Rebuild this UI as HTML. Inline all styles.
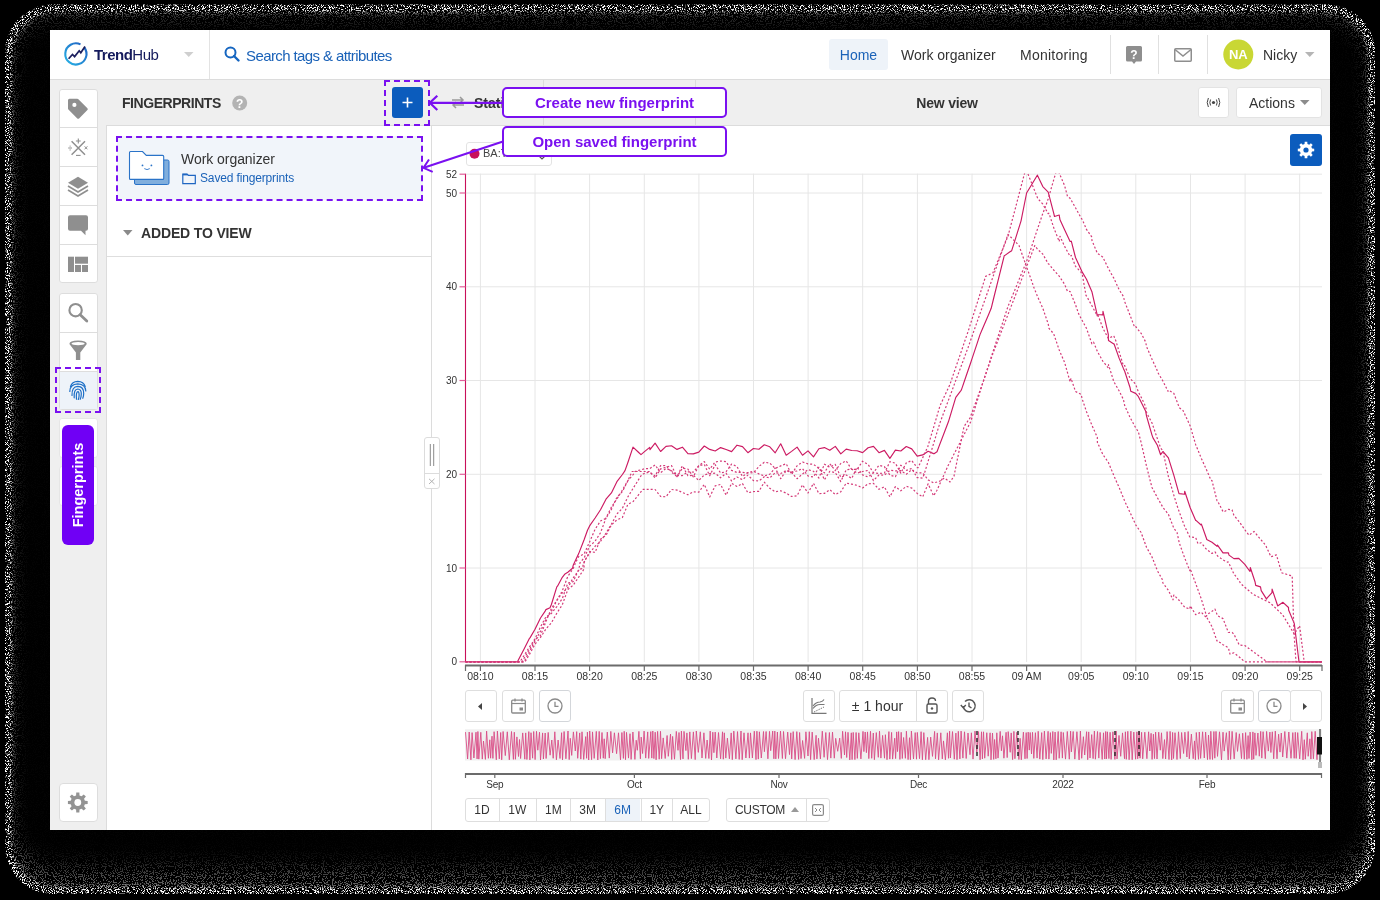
<!DOCTYPE html><html><head><meta charset="utf-8"><style>
html,body{margin:0;padding:0;}
body{width:1380px;height:900px;position:relative;overflow:hidden;background:#000;font-family:"Liberation Sans",sans-serif;color:#333;}
div{box-sizing:border-box;}
body{-webkit-font-smoothing:antialiased;}
body>div,body>svg{will-change:transform;}
svg{position:absolute;overflow:visible;}
</style></head><body>

<svg style="left:0;top:0" width="1380" height="900">
<defs>
<filter id="nzW" x="0" y="0" width="1380" height="900" filterUnits="userSpaceOnUse" color-interpolation-filters="sRGB">
<feTurbulence type="fractalNoise" baseFrequency="0.85" numOctaves="2" seed="9"/>
<feColorMatrix type="matrix" values="0 0 0 0 1  0 0 0 0 1  0 0 0 0 1  3 0 0 0 -1.05"/>
<feComponentTransfer><feFuncA type="discrete" tableValues="0 0 0 0 0 1 1"/></feComponentTransfer>
</filter>
<filter id="nzG" x="0" y="0" width="1380" height="900" filterUnits="userSpaceOnUse" color-interpolation-filters="sRGB">
<feTurbulence type="fractalNoise" baseFrequency="0.9" numOctaves="2" seed="23"/>
<feColorMatrix type="matrix" values="0 0 0 0 1  0 0 0 0 1  0 0 0 0 1  3 0 0 0 -1.05"/>
<feComponentTransfer><feFuncA type="discrete" tableValues="0 0 0 0 1 1"/></feComponentTransfer>
</filter>
<filter id="bl" x="-10%" y="-10%" width="120%" height="120%"><feGaussianBlur stdDeviation="8 12"/></filter>
<filter id="bl2" x="-10%" y="-10%" width="120%" height="120%"><feGaussianBlur stdDeviation="2"/></filter>
<mask id="grad" maskUnits="userSpaceOnUse" x="0" y="0" width="1380" height="900">
<rect x="5" y="4.5" width="1370" height="889.5" rx="48" fill="#fff"/>
<rect x="12" y="14" width="1356" height="857" rx="44" fill="#000" fill-opacity="0.97" filter="url(#bl)"/>
</mask>
<mask id="rim" maskUnits="userSpaceOnUse" x="0" y="0" width="1380" height="900">
<rect x="5" y="4.5" width="1370" height="889.5" rx="48" fill="#fff"/>
<rect x="12" y="12.5" width="1356" height="874" rx="44" fill="#000" filter="url(#bl2)"/>
</mask>
</defs>
<rect x="0" y="0" width="1380" height="900" fill="#fff" filter="url(#nzG)" mask="url(#grad)" opacity="0.42"/>
<rect x="0" y="0" width="1380" height="900" fill="#fff" filter="url(#nzW)" mask="url(#rim)"/>
</svg>
<div style="position:absolute;left:50px;top:30px;width:1280px;height:800px;background:#fff;"></div>
<div style="position:absolute;left:50px;top:79px;width:1280px;height:1px;background:#dcdcdc;"></div>
<svg style="left:0;top:0" width="1380" height="900" viewBox="0 0 1380 900">
<defs><linearGradient id="lg" x1="0" y1="1" x2="1" y2="0"><stop offset="0" stop-color="#27b3e6"/><stop offset="1" stop-color="#1f5cc0"/></linearGradient></defs>
<path d="M 84.3 47.5 A 10.6 10.6 0 1 1 80.5 44.4" fill="none" stroke="url(#lg)" stroke-width="2.1"/>
<polyline points="68.6,58.8 72.5,54.5 74.6,56.6 79.2,50.8 80.8,52.8 85,46.6" fill="none" stroke="#1c1f5e" stroke-width="1.7" stroke-linejoin="miter"/>
</svg>
<div style="position:absolute;left:94px;top:45px;height:20px;line-height:20px;white-space:nowrap;font-size:15px;color:#141a5c;letter-spacing:-0.5px;"><b>Trend</b>Hub</div>
<svg style="left:184px;top:52px" width="10" height="5"><path d="M0 0 L9.5 0 L4.75 5 Z" fill="#cfcfcf"/></svg>
<div style="position:absolute;left:209px;top:30px;width:1px;height:49px;background:#e3e3e3;"></div>
<svg style="left:224px;top:46px" width="17" height="17"><circle cx="6.5" cy="6.5" r="5" fill="none" stroke="#1565c0" stroke-width="2"/><line x1="10" y1="10" x2="14.5" y2="14.5" stroke="#1565c0" stroke-width="2.4" stroke-linecap="round"/></svg>
<div style="position:absolute;left:246px;top:45.5px;height:20px;line-height:20px;white-space:nowrap;font-size:15px;color:#1a62b8;letter-spacing:-0.6px;">Search tags &amp; attributes</div>
<div style="position:absolute;left:829px;top:39px;width:59px;height:31px;background:#eef3f9;border-radius:3px;"></div>
<div style="position:absolute;left:829px;top:45px;width:59px;height:20px;line-height:20px;white-space:nowrap;font-size:14px;color:#1a62b8;text-align:center;">Home</div>
<div style="position:absolute;left:901px;top:45px;height:20px;line-height:20px;white-space:nowrap;font-size:14px;color:#333;">Work organizer</div>
<div style="position:absolute;left:1020px;top:45px;height:20px;line-height:20px;white-space:nowrap;font-size:14px;color:#333;letter-spacing:0.25px;">Monitoring</div>
<div style="position:absolute;left:1110px;top:35px;width:1px;height:39px;background:#e0e0e0;"></div>
<div style="position:absolute;left:1158px;top:35px;width:1px;height:39px;background:#e0e0e0;"></div>
<div style="position:absolute;left:1207px;top:35px;width:1px;height:39px;background:#e0e0e0;"></div>
<svg style="left:1126px;top:46px" width="17" height="19"><path d="M1.5 0 H14.5 Q16 0 16 1.5 V14 Q16 15.5 14.5 15.5 H10 L8 18 L6 15.5 H1.5 Q0 15.5 0 14 V1.5 Q0 0 1.5 0 Z" fill="#8e8e8e"/><text x="8" y="12.5" font-size="12" font-weight="bold" text-anchor="middle" fill="#fff" font-family="Liberation Sans">?</text></svg>
<svg style="left:1174px;top:47.5px" width="18" height="14"><rect x="0.75" y="0.75" width="16.5" height="12.5" rx="1" fill="none" stroke="#8e8e8e" stroke-width="1.5"/><polyline points="1,1.5 9,8 17,1.5" fill="none" stroke="#8e8e8e" stroke-width="1.5"/></svg>
<svg style="left:1223px;top:39px" width="31" height="31"><circle cx="15.3" cy="15.5" r="15" fill="#c9d734"/><text x="15.3" y="20.2" font-size="13" font-weight="bold" text-anchor="middle" fill="#fff" font-family="Liberation Sans">NA</text></svg>
<div style="position:absolute;left:1263px;top:45px;height:20px;line-height:20px;white-space:nowrap;font-size:14px;color:#333;">Nicky</div>
<svg style="left:1305px;top:52px" width="10" height="5"><path d="M0 0 L9.5 0 L4.75 5 Z" fill="#b5b5b5"/></svg>
<div style="position:absolute;left:50px;top:80px;width:57px;height:750px;background:#efefef;"></div>
<div style="position:absolute;left:59px;top:89px;width:39px;height:194px;background:#fff;border:1px solid #dddddd;border-radius:3px;"></div>
<div style="position:absolute;left:59px;top:127px;width:39px;height:1px;background:#dddddd;"></div>
<div style="position:absolute;left:59px;top:166px;width:39px;height:1px;background:#dddddd;"></div>
<div style="position:absolute;left:59px;top:205px;width:39px;height:1px;background:#dddddd;"></div>
<div style="position:absolute;left:59px;top:244px;width:39px;height:1px;background:#dddddd;"></div>
<div style="position:absolute;left:59px;top:293px;width:39px;height:117px;background:#fff;border:1px solid #dddddd;border-radius:3px;"></div>
<div style="position:absolute;left:59px;top:332px;width:39px;height:1px;background:#dddddd;"></div>
<div style="position:absolute;left:59px;top:371px;width:39px;height:1px;background:#dddddd;"></div>
<div style="position:absolute;left:60px;top:372px;width:37px;height:37px;background:#eef3f9;"></div>
<div style="position:absolute;left:55px;top:367px;width:46px;height:46px;border:2px dashed #7a10f0;"></div>
<div style="position:absolute;left:59px;top:418px;width:39px;height:40px;background:#fff;border:1px solid #e6e6e6;border-radius:3px;"></div>
<div style="position:absolute;left:59px;top:466px;width:39px;height:40px;background:#fff;border:1px solid #e6e6e6;border-radius:3px;"></div>
<div style="position:absolute;left:62px;top:425px;width:32px;height:120px;background:#7000f5;border-radius:6px;"></div>
<div style="position:absolute;left:62px;top:425px;width:32px;height:120px;"><div style="position:absolute;left:16px;top:60px;transform:translate(-50%,-50%) rotate(-90deg);font-size:14.5px;font-weight:bold;color:#fff;white-space:nowrap;line-height:16px;">Fingerprints</div></div>
<div style="position:absolute;left:59px;top:783px;width:39px;height:39px;background:#fff;border:1px solid #dddddd;border-radius:4px;"></div>
<svg style="left:0;top:0" width="1380" height="900">
<path d="M68 100.3 Q68 98.8 69.5 98.8 L77.3 98.8 Q77.9 98.8 78.4 99.3 L87.4 108.3 Q88.3 109.2 87.4 110.1 L79.1 118.4 Q78.2 119.3 77.3 118.4 L68.4 109.5 Q68 109.1 68 108.5 Z" fill="#8f8f8f"/>
<circle cx="74.4" cy="104.9" r="2.1" fill="#fff"/>
<path d="M71.6 141.2 L85 154.8 M85 141.2 L71.6 154.8" stroke="#8f8f8f" stroke-width="1.5"/>
<path d="M78.3 138.6 V143.4 M75.9 141 H80.7" stroke="#8f8f8f" stroke-width="1.1"/>
<path d="M76 155.4 H80.6" stroke="#8f8f8f" stroke-width="1.1"/>
<path d="M68.2 148 H72" stroke="#8f8f8f" stroke-width="1"/><circle cx="70.1" cy="146.1" r="0.6" fill="#8f8f8f"/><circle cx="70.1" cy="149.9" r="0.6" fill="#8f8f8f"/>
<path d="M84.6 146.3 L87.4 149.3 M87.4 146.3 L84.6 149.3" stroke="#8f8f8f" stroke-width="1"/>
<path d="M78 176.7 L88 182.7 L78 188.7 L68 182.7 Z" fill="#8f8f8f"/>
<path d="M68 186 L78 192 L88 186" fill="none" stroke="#8f8f8f" stroke-width="1.7"/>
<path d="M68 190 L78 196 L88 190" fill="none" stroke="#8f8f8f" stroke-width="1.7"/>
<path d="M70 215.3 H86 Q88 215.3 88 217.3 V228.7 Q88 230.7 86 230.7 H85.5 V235.3 L81 230.7 H70 Q68 230.7 68 228.7 V217.3 Q68 215.3 70 215.3 Z" fill="#8f8f8f"/>
<rect x="68" y="256.7" width="6" height="15.3" fill="#8f8f8f"/><rect x="75" y="256.7" width="13" height="7" fill="#8f8f8f"/>
<rect x="75" y="265" width="6" height="7" fill="#8f8f8f"/><rect x="82" y="265" width="6" height="7" fill="#8f8f8f"/>
<circle cx="75.6" cy="310.2" r="6.2" fill="none" stroke="#8f8f8f" stroke-width="2.1"/>
<path d="M80.2 314.8 L86.8 321" stroke="#8f8f8f" stroke-width="2.8" stroke-linecap="round"/>
<path d="M69.4 344 Q69.4 340.5 78 340.5 Q86.8 340.5 86.8 344 L80.3 352.5 V360 H75.9 V352.5 Z" fill="#8f8f8f"/>
<ellipse cx="78.1" cy="343.6" rx="6.6" ry="1.7" fill="#fff"/>
<g fill="none" stroke="#1d6fc6" stroke-width="1.2" stroke-linecap="round">
<path d="M70.5 386.5 Q72 381.5 77.8 381.3 Q83.6 381.5 85.2 386.5"/>
<path d="M69.8 391.5 Q69.8 384.2 77.8 383.8 Q85.6 384.2 85.8 391"/>
<path d="M72 395.5 Q71.6 386.6 77.8 386.4 Q83.8 386.6 83.7 393.5 Q83.6 396.5 82.8 398.3"/>
<path d="M74.2 397.8 Q73.6 389.2 77.8 389 Q81.4 389.2 81.3 394 Q81.2 397.3 80.2 399.3"/>
<path d="M76.5 399.2 Q75.8 391.8 77.9 391.7 Q79.2 391.8 79.1 395.5 Q79 397.5 78.3 399.5"/>
</g>
</svg>
<div style="position:absolute;left:106px;top:80px;width:326px;height:46px;background:#efefef;"></div>
<div style="position:absolute;left:106px;top:125px;width:326px;height:705px;background:#fff;border-top:1px solid #dcdcdc;border-right:1px solid #dcdcdc;border-left:1px solid #dcdcdc;"></div>
<div style="position:absolute;left:122px;top:93px;height:20px;line-height:20px;white-space:nowrap;font-size:14px;font-weight:bold;color:#333;letter-spacing:-0.45px;">FINGERPRINTS</div>
<svg style="left:232px;top:95px" width="16" height="16"><circle cx="7.7" cy="8" r="7.5" fill="#b3b3b3"/><text x="7.7" y="12.6" font-size="12" font-weight="bold" text-anchor="middle" fill="#fff" font-family="Liberation Sans">?</text></svg>
<div style="position:absolute;left:392px;top:87px;width:31px;height:31px;background:#0b5cbd;border-radius:3px;"></div>
<svg style="left:401px;top:96px" width="13" height="13"><path d="M6.5 1.5 V11.5 M1.5 6.5 H11.5" stroke="#fff" stroke-width="1.6"/></svg>
<div style="position:absolute;left:384px;top:80px;width:46px;height:46px;border:2px dashed #7a10f0;"></div>
<div style="position:absolute;left:117px;top:136px;width:306px;height:64px;background:#f1f5fa;"></div>
<div style="position:absolute;left:116px;top:136px;width:307px;height:65px;border:2px dashed #7a10f0;"></div>
<svg style="left:0;top:0" width="1380" height="900">
<path d="M134.5 161 Q134.5 160 135.5 160 L167.5 160 Q169 160 169 161.5 L169 183 Q169 184.5 167.5 184.5 L136 184.5 Q134.5 184.5 134.5 183 Z" fill="#80aedd" stroke="#2a73c8" stroke-width="1"/>
<path d="M129.5 152.5 Q129.5 151.5 130.5 151.5 L142.5 151.5 L146.3 155.4 L162.5 155.4 Q163.7 155.4 163.7 156.6 L163.7 178.4 Q163.7 179.4 162.7 179.4 L130.5 179.4 Q129.5 179.4 129.5 178.4 Z" fill="#fff" stroke="#2a73c8" stroke-width="1.1"/>
<circle cx="142.5" cy="165.4" r="0.9" fill="#2a73c8"/><circle cx="151.4" cy="165.4" r="0.9" fill="#2a73c8"/>
<path d="M144.3 168.6 Q147 170.6 149.8 168.6" fill="none" stroke="#2a73c8" stroke-width="0.9"/>
<path d="M182.8 174.2 L187 174.2 L188.4 175.3 L195.3 175.3 L195.3 183.6 L182.8 183.6 Z" fill="none" stroke="#1f66c2" stroke-width="1.2"/>
<line x1="182.8" y1="174.6" x2="187.5" y2="174.6" stroke="#1f66c2" stroke-width="1.6"/>
</svg>
<div style="position:absolute;left:181px;top:149px;height:20px;line-height:20px;white-space:nowrap;font-size:14px;color:#333;letter-spacing:-0.05px;">Work organizer</div>
<div style="position:absolute;left:200px;top:170px;height:17px;line-height:17px;white-space:nowrap;font-size:12px;color:#1a62b8;letter-spacing:-0.15px;">Saved fingerprints</div>
<svg style="left:123px;top:230px" width="10" height="6"><path d="M0 0 L9.5 0 L4.75 5.5 Z" fill="#8a8a8a"/></svg>
<div style="position:absolute;left:141px;top:223px;height:20px;line-height:20px;white-space:nowrap;font-size:14px;font-weight:bold;color:#333;letter-spacing:-0.15px;">ADDED TO VIEW</div>
<div style="position:absolute;left:107px;top:256px;width:324px;height:1px;background:#dedede;"></div>
<div style="position:absolute;left:432px;top:80px;width:898px;height:46px;background:#efefef;border-bottom:1px solid #dcdcdc;"></div>
<svg style="left:450px;top:96px" width="16" height="13"><path d="M2 4 H13 M10 1 L13 4 L10 7 M14 9 H3 M6 6 L3 9 L6 12" fill="none" stroke="#9a9a9a" stroke-width="1.5"/></svg>
<div style="position:absolute;left:474px;top:93px;height:20px;line-height:20px;white-space:nowrap;font-size:14px;font-weight:bold;color:#333;">Stati</div>
<div style="position:absolute;left:543px;top:80px;width:1px;height:45px;background:#dcdcdc;"></div>
<div style="position:absolute;left:695px;top:80px;width:1px;height:45px;background:#dcdcdc;"></div>
<div style="position:absolute;left:897px;top:93px;width:100px;height:20px;line-height:20px;white-space:nowrap;font-size:14px;font-weight:bold;color:#333;text-align:center;letter-spacing:-0.2px;">New view</div>
<div style="position:absolute;left:1198px;top:87px;width:31px;height:31px;background:#fff;border:1px solid #e3e3e3;border-radius:3px;"></div>
<svg style="left:1206px;top:97px" width="15" height="11"><circle cx="7.5" cy="5.5" r="1.6" fill="#444"/><path d="M4.6 2.5 Q3 5.5 4.6 8.5 M10.4 2.5 Q12 5.5 10.4 8.5 M2.4 1 Q0 5.5 2.4 10 M12.6 1 Q15 5.5 12.6 10" fill="none" stroke="#444" stroke-width="1"/></svg>
<div style="position:absolute;left:1236px;top:87px;width:86px;height:31px;background:#fff;border:1px solid #e3e3e3;border-radius:3px;"></div>
<div style="position:absolute;left:1249px;top:93px;height:20px;line-height:20px;white-space:nowrap;font-size:14px;color:#333;">Actions</div>
<svg style="left:1300px;top:100px" width="10" height="6"><path d="M0 0 L9.5 0 L4.75 5 Z" fill="#8c8c8c"/></svg>
<svg style="left:0;top:0" width="1380" height="900"><defs><clipPath id="plot"><rect x="465" y="173.5" width="858" height="490"/></clipPath></defs>
<line x1="465.5" y1="174.2" x2="1322" y2="174.2" stroke="#e6e6e6" stroke-width="1"/><line x1="465.5" y1="193.0" x2="1322" y2="193.0" stroke="#e6e6e6" stroke-width="1"/><line x1="465.5" y1="286.8" x2="1322" y2="286.8" stroke="#e6e6e6" stroke-width="1"/><line x1="465.5" y1="380.5" x2="1322" y2="380.5" stroke="#e6e6e6" stroke-width="1"/><line x1="465.5" y1="474.3" x2="1322" y2="474.3" stroke="#e6e6e6" stroke-width="1"/><line x1="465.5" y1="568.0" x2="1322" y2="568.0" stroke="#e6e6e6" stroke-width="1"/><line x1="480.4" y1="173.7" x2="480.4" y2="662" stroke="#e6e6e6" stroke-width="1"/><line x1="535.0" y1="173.7" x2="535.0" y2="662" stroke="#e6e6e6" stroke-width="1"/><line x1="589.6" y1="173.7" x2="589.6" y2="662" stroke="#e6e6e6" stroke-width="1"/><line x1="644.3" y1="173.7" x2="644.3" y2="662" stroke="#e6e6e6" stroke-width="1"/><line x1="698.9" y1="173.7" x2="698.9" y2="662" stroke="#e6e6e6" stroke-width="1"/><line x1="753.5" y1="173.7" x2="753.5" y2="662" stroke="#e6e6e6" stroke-width="1"/><line x1="808.1" y1="173.7" x2="808.1" y2="662" stroke="#e6e6e6" stroke-width="1"/><line x1="862.7" y1="173.7" x2="862.7" y2="662" stroke="#e6e6e6" stroke-width="1"/><line x1="917.4" y1="173.7" x2="917.4" y2="662" stroke="#e6e6e6" stroke-width="1"/><line x1="972.0" y1="173.7" x2="972.0" y2="662" stroke="#e6e6e6" stroke-width="1"/><line x1="1026.6" y1="173.7" x2="1026.6" y2="662" stroke="#e6e6e6" stroke-width="1"/><line x1="1081.2" y1="173.7" x2="1081.2" y2="662" stroke="#e6e6e6" stroke-width="1"/><line x1="1135.8" y1="173.7" x2="1135.8" y2="662" stroke="#e6e6e6" stroke-width="1"/><line x1="1190.5" y1="173.7" x2="1190.5" y2="662" stroke="#e6e6e6" stroke-width="1"/><line x1="1245.1" y1="173.7" x2="1245.1" y2="662" stroke="#e6e6e6" stroke-width="1"/><line x1="1299.7" y1="173.7" x2="1299.7" y2="662" stroke="#e6e6e6" stroke-width="1"/>
<line x1="465.5" y1="173.7" x2="465.5" y2="662" stroke="#c8105a" stroke-width="1.1"/>
<line x1="459.5" y1="174.2" x2="465.5" y2="174.2" stroke="#e0609a" stroke-width="1.2"/>
<text x="457" y="177.8" font-size="10" text-anchor="end" fill="#333" font-family="Liberation Sans">52</text>
<line x1="459.5" y1="193.0" x2="465.5" y2="193.0" stroke="#e0609a" stroke-width="1.2"/>
<text x="457" y="196.6" font-size="10" text-anchor="end" fill="#333" font-family="Liberation Sans">50</text>
<line x1="459.5" y1="286.8" x2="465.5" y2="286.8" stroke="#e0609a" stroke-width="1.2"/>
<text x="457" y="290.4" font-size="10" text-anchor="end" fill="#333" font-family="Liberation Sans">40</text>
<line x1="459.5" y1="380.5" x2="465.5" y2="380.5" stroke="#e0609a" stroke-width="1.2"/>
<text x="457" y="384.1" font-size="10" text-anchor="end" fill="#333" font-family="Liberation Sans">30</text>
<line x1="459.5" y1="474.3" x2="465.5" y2="474.3" stroke="#e0609a" stroke-width="1.2"/>
<text x="457" y="477.9" font-size="10" text-anchor="end" fill="#333" font-family="Liberation Sans">20</text>
<line x1="459.5" y1="568.0" x2="465.5" y2="568.0" stroke="#e0609a" stroke-width="1.2"/>
<text x="457" y="571.6" font-size="10" text-anchor="end" fill="#333" font-family="Liberation Sans">10</text>
<line x1="459.5" y1="661.8" x2="465.5" y2="661.8" stroke="#e0609a" stroke-width="1.2"/>
<text x="457" y="665.4" font-size="10" text-anchor="end" fill="#333" font-family="Liberation Sans">0</text>
<g clip-path="url(#plot)" fill="none" stroke-linejoin="round">
<path d="M465.5 661.8 L469.5 661.8 L474.9 661.8 L480.4 661.8 L485.9 661.8 L491.3 661.8 L496.8 661.8 L502.2 661.8 L507.7 661.8 L513.2 661.8 L517.5 661.8 L518.6 659.6 L524.1 649.0 L529.5 638.3 L530.0 637.9 L535.0 629.3 L540.5 618.0 L545.0 611.4 L545.9 609.6 L550.0 607.8 L551.4 604.5 L556.8 586.9 L557.5 586.2 L562.3 577.3 L565.0 573.9 L567.8 572.2 L572.5 568.3 L573.2 565.3 L578.7 553.6 L584.1 539.7 L587.5 530.2 L589.6 525.9 L595.1 518.0 L600.5 509.7 L606.0 499.2 L611.4 492.9 L616.9 481.7 L622.4 474.5 L625.0 470.6 L627.8 462.7 L633.0 447.1 L633.3 447.4 L638.7 452.5 L641.0 454.6 L644.2 451.9 L649.7 447.4 L650.0 449.6 L655.1 443.1 L660.6 451.5 L666.0 446.4 L671.5 445.8 L677.0 449.4 L682.4 447.2 L687.9 453.7 L693.3 453.9 L698.8 452.1 L704.3 446.0 L709.7 449.4 L715.2 451.0 L720.6 447.6 L726.1 449.5 L731.6 451.6 L737.0 445.2 L742.5 446.6 L747.9 452.7 L753.4 448.5 L758.9 449.3 L764.3 444.8 L769.8 446.8 L775.2 452.8 L780.7 443.8 L786.2 455.2 L791.6 451.4 L797.1 447.1 L802.5 455.2 L808.0 450.9 L813.5 456.9 L818.9 448.8 L824.4 447.6 L829.8 450.3 L835.3 446.4 L840.8 453.9 L846.2 449.1 L851.7 450.5 L857.1 450.8 L862.6 452.6 L868.1 447.7 L873.5 446.4 L879.0 452.7 L884.4 450.4 L889.9 458.4 L895.4 450.1 L900.8 451.0 L906.3 446.5 L911.7 448.9 L917.2 456.1 L922.7 454.9 L928.1 451.3 L933.6 453.6 L934.0 453.7 L937.0 451.8 L939.0 446.4 L944.5 432.0 L948.4 421.8 L950.0 416.6 L955.4 398.6 L955.8 397.4 L960.9 390.6 L961.4 389.9 L966.3 375.5 L970.7 362.7 L971.8 359.4 L977.3 342.9 L980.0 334.6 L982.7 328.2 L988.2 315.4 L991.2 308.3 L993.6 298.5 L999.1 276.4 L1004.2 255.8 L1004.6 255.6 L1010.0 251.8 L1011.7 250.7 L1015.5 238.7 L1020.9 221.3 L1021.0 221.1 L1026.4 194.0 L1026.6 193.0 L1031.9 184.3 L1037.3 175.3 L1037.4 175.2 L1042.8 186.6 L1048.2 192.1 L1049.0 195.2 L1053.7 213.1 L1054.5 216.5 L1059.2 215.0 L1060.0 219.8 L1064.6 229.8 L1070.1 241.5 L1071.3 241.2 L1075.5 257.5 L1081.0 269.4 L1082.4 272.4 L1086.5 279.2 L1091.7 291.2 L1091.9 291.7 L1097.3 315.4 L1097.4 314.5 L1102.8 314.9 L1103.0 311.4 L1108.3 334.4 L1108.5 340.6 L1113.8 344.0 L1114.0 343.8 L1119.2 358.4 L1123.4 368.4 L1124.7 371.2 L1130.1 387.8 L1130.8 391.3 L1135.6 393.4 L1138.3 396.4 L1141.1 402.1 L1145.7 411.3 L1146.5 415.8 L1152.0 435.1 L1153.0 437.9 L1157.4 445.2 L1160.6 454.7 L1162.9 451.5 L1168.0 457.4 L1168.4 457.9 L1173.8 475.2 L1179.0 493.7 L1179.3 493.6 L1184.5 494.2 L1184.7 491.3 L1190.2 507.7 L1195.7 520.4 L1196.0 520.3 L1201.1 525.0 L1201.4 524.1 L1206.6 538.8 L1206.7 539.4 L1212.0 542.3 L1217.0 546.3 L1217.5 545.1 L1223.0 552.8 L1228.4 552.8 L1229.0 555.1 L1233.9 558.6 L1238.4 558.4 L1239.3 558.8 L1244.8 564.4 L1250.0 571.5 L1250.3 567.5 L1255.0 581.7 L1255.7 585.4 L1260.5 586.9 L1261.2 590.6 L1266.6 599.1 L1267.0 598.1 L1272.0 592.6 L1272.1 589.1 L1277.4 605.0 L1277.6 605.9 L1283.0 602.3 L1288.5 607.5 L1288.6 610.0 L1293.9 622.6 L1294.3 623.6 L1299.0 661.8 L1299.4 661.8 L1304.9 661.8 L1310.3 661.8 L1315.8 661.8 L1321.2 661.8 L1322.0 661.8" stroke="#cc1a62" stroke-width="1.15"/>
<path d="M465.5 661.8 L469.5 661.8 L474.9 661.8 L480.4 661.8 L485.9 661.8 L491.3 661.8 L496.8 661.8 L502.2 661.8 L507.7 661.8 L513.2 661.8 L518.6 661.8 L522.0 661.8 L524.1 658.3 L529.5 649.2 L535.0 639.7 L540.5 635.5 L545.9 621.7 L551.4 608.4 L556.8 600.4 L562.3 592.9 L567.8 587.8 L573.2 577.8 L578.7 570.5 L580.0 562.7 L584.1 557.9 L589.6 546.2 L595.1 541.2 L600.5 532.8 L606.0 518.0 L611.4 507.1 L616.9 499.0 L622.4 490.1 L627.8 480.7 L633.3 474.4 L635.0 471.5 L638.7 470.4 L644.2 468.9 L645.0 468.7 L649.7 468.6 L655.1 465.0 L660.6 472.7 L666.0 468.3 L671.5 470.7 L677.0 475.6 L682.4 475.6 L687.9 471.8 L693.3 472.1 L698.8 465.6 L704.3 461.6 L709.7 469.2 L715.2 461.9 L720.6 461.1 L726.1 461.6 L731.6 470.4 L737.0 472.5 L742.5 472.4 L747.9 472.9 L753.4 472.7 L758.9 466.4 L764.3 462.2 L769.8 463.1 L775.2 468.5 L780.7 465.9 L786.2 463.7 L791.6 474.4 L797.1 465.7 L802.5 462.0 L808.0 463.9 L813.5 464.3 L818.9 468.4 L824.4 472.9 L829.8 463.7 L835.3 470.5 L840.8 463.5 L846.2 460.9 L851.7 469.5 L857.1 469.4 L862.6 461.2 L868.1 464.5 L873.5 472.8 L879.0 473.4 L884.4 473.1 L889.9 461.7 L895.4 463.2 L900.8 473.1 L906.3 462.9 L911.7 460.5 L917.2 467.7 L918.0 467.7 L922.7 457.7 L928.0 446.2 L928.1 445.7 L933.6 427.4 L939.0 409.1 L940.0 405.8 L944.5 396.1 L950.0 384.4 L950.0 384.3 L955.4 368.5 L960.9 352.5 L966.3 336.6 L968.0 331.8 L971.8 319.8 L977.3 302.7 L982.7 285.5 L985.6 276.4 L988.2 275.1 L993.0 272.7 L993.6 271.1 L999.1 257.8 L1004.6 244.5 L1008.0 236.1 L1010.0 228.5 L1015.5 207.8 L1020.9 187.1 L1025.8 168.6 L1026.4 170.1 L1031.9 183.8 L1037.3 197.4 L1037.8 198.6 L1042.8 204.1 L1048.2 213.7 L1049.0 213.3 L1053.7 227.6 L1059.2 241.5 L1060.0 236.3 L1064.6 246.4 L1070.1 256.4 L1071.3 255.4 L1075.5 266.3 L1081.0 272.2 L1082.4 274.9 L1086.0 295.5 L1086.5 296.0 L1091.9 305.7 L1097.3 315.9 L1097.4 313.5 L1102.8 328.0 L1106.6 335.2 L1108.3 338.4 L1113.8 335.8 L1116.0 341.3 L1119.2 351.9 L1123.4 365.8 L1124.7 365.6 L1130.1 378.5 L1135.6 384.1 L1138.3 391.8 L1141.1 397.1 L1145.7 406.6 L1146.5 412.4 L1152.0 423.0 L1157.4 438.7 L1160.6 448.0 L1162.9 450.8 L1168.4 476.5 L1173.8 495.1 L1177.0 505.4 L1179.3 512.0 L1184.7 526.5 L1189.8 537.0 L1190.2 536.9 L1195.7 537.6 L1198.0 543.8 L1201.1 542.8 L1206.6 549.4 L1212.0 553.4 L1215.0 551.9 L1217.5 555.9 L1223.0 559.9 L1227.8 562.3 L1228.4 562.1 L1233.9 573.9 L1239.3 580.9 L1240.5 583.5 L1244.8 587.2 L1250.3 591.9 L1253.0 594.3 L1255.7 595.6 L1261.2 598.4 L1266.6 601.1 L1270.0 602.7 L1272.1 604.7 L1277.6 610.0 L1282.7 614.9 L1283.0 615.4 L1288.5 624.5 L1293.9 633.5 L1294.3 634.0 L1299.4 626.0 L1299.6 625.7 L1304.2 661.8 L1304.9 661.8 L1310.3 661.8 L1315.8 661.8 L1321.2 661.8 L1322.0 661.8" stroke="#d43a78" stroke-width="1.2" stroke-dasharray="2 2"/>
<path d="M465.5 661.8 L469.5 661.8 L474.9 661.8 L480.4 661.8 L485.9 661.8 L491.3 661.8 L496.8 661.8 L502.2 661.8 L507.7 661.8 L513.2 661.8 L518.6 661.8 L524.0 661.8 L524.1 661.7 L529.5 651.5 L535.0 641.3 L540.5 631.1 L545.9 619.3 L551.4 611.4 L556.8 600.5 L562.3 590.9 L567.8 576.4 L573.2 568.5 L576.0 561.7 L578.7 556.6 L584.1 553.9 L589.6 541.9 L595.1 529.2 L600.5 521.0 L606.0 518.4 L611.4 509.4 L616.9 497.3 L622.4 491.6 L627.8 480.9 L632.0 471.5 L633.3 471.5 L638.7 471.5 L644.2 471.5 L645.0 471.5 L649.7 471.5 L655.1 477.9 L660.6 468.9 L666.0 467.2 L671.5 465.5 L677.0 476.7 L682.4 468.2 L687.9 469.1 L693.3 476.8 L698.8 465.7 L704.3 464.5 L709.7 475.7 L715.2 464.7 L720.6 473.0 L726.1 471.7 L731.6 464.1 L737.0 466.5 L742.5 476.5 L747.9 472.5 L753.4 471.2 L758.9 473.9 L764.3 476.0 L769.8 474.2 L775.2 468.1 L780.7 478.7 L786.2 470.7 L791.6 472.4 L797.1 478.7 L802.5 474.0 L808.0 469.6 L813.5 471.3 L818.9 478.0 L824.4 464.2 L829.8 467.1 L835.3 464.4 L840.8 477.4 L846.2 475.0 L851.7 478.4 L857.1 467.3 L862.6 474.9 L868.1 477.0 L873.5 472.6 L879.0 465.3 L884.4 466.7 L889.9 475.1 L895.4 476.7 L900.8 465.2 L906.3 470.4 L911.7 468.5 L917.2 477.6 L922.7 478.1 L925.0 471.5 L928.1 461.3 L933.6 443.6 L939.0 425.8 L940.0 422.7 L944.5 410.7 L950.0 396.0 L955.4 381.4 L960.9 366.8 L966.3 352.2 L968.0 347.7 L971.8 336.9 L977.3 321.4 L982.7 306.0 L988.2 290.5 L993.6 275.0 L999.1 259.5 L1004.6 244.0 L1008.0 234.3 L1010.0 236.3 L1015.5 241.9 L1019.0 245.5 L1020.9 251.0 L1026.4 266.3 L1031.9 281.7 L1034.0 287.7 L1037.3 296.0 L1042.8 308.2 L1048.2 323.9 L1049.0 328.4 L1053.7 333.8 L1059.2 350.0 L1064.6 362.5 L1070.1 381.8 L1071.0 378.3 L1075.5 391.5 L1081.0 394.3 L1082.4 399.6 L1086.5 411.7 L1091.9 425.2 L1097.3 437.3 L1097.4 442.4 L1102.8 454.4 L1108.3 462.3 L1113.8 475.4 L1117.0 482.8 L1119.2 487.6 L1124.7 501.1 L1130.1 512.6 L1135.6 524.5 L1136.0 525.4 L1141.1 532.5 L1146.5 547.3 L1152.0 557.0 L1157.4 570.7 L1162.3 579.5 L1162.9 583.0 L1168.4 590.3 L1173.0 599.8 L1173.8 595.0 L1179.3 600.5 L1184.7 607.3 L1189.8 609.0 L1190.2 605.8 L1195.7 614.7 L1201.1 612.1 L1206.6 617.7 L1206.7 617.3 L1212.0 626.7 L1217.0 641.0 L1217.5 640.7 L1223.0 644.7 L1228.4 647.8 L1230.0 654.2 L1233.9 652.8 L1239.3 657.0 L1244.7 661.8 L1244.8 661.8 L1250.3 661.8 L1255.7 661.8 L1261.2 661.8 L1266.6 661.8 L1272.1 661.8 L1277.6 661.8 L1283.0 661.8 L1288.5 661.8 L1293.9 661.8 L1299.4 661.8 L1304.9 661.8 L1310.3 661.8 L1315.8 661.8 L1321.2 661.8 L1322.0 661.8" stroke="#d43a78" stroke-width="1.2" stroke-dasharray="2 2"/>
<path d="M465.5 661.8 L469.5 661.8 L474.9 661.8 L480.4 661.8 L485.9 661.8 L491.3 661.8 L496.8 661.8 L502.2 661.8 L507.7 661.8 L513.2 661.8 L518.6 661.8 L524.1 661.8 L525.0 661.8 L529.5 654.4 L535.0 644.2 L540.5 637.4 L545.9 629.0 L551.4 622.8 L556.8 613.2 L562.3 604.8 L567.8 589.6 L573.2 585.2 L578.7 577.1 L584.0 569.1 L584.1 561.8 L589.6 553.0 L595.1 546.3 L600.5 541.4 L606.0 533.2 L611.4 524.1 L616.9 514.0 L622.4 508.3 L627.8 497.0 L633.3 488.0 L638.7 479.4 L642.0 474.3 L644.2 473.6 L648.0 472.4 L649.7 472.4 L655.1 476.0 L660.6 465.6 L666.0 465.5 L671.5 472.0 L677.0 476.6 L682.4 465.8 L687.9 475.8 L693.3 475.1 L698.8 480.5 L704.3 474.9 L709.7 473.5 L715.2 473.2 L720.6 477.8 L726.1 473.3 L731.6 480.9 L737.0 477.0 L742.5 479.7 L747.9 475.1 L753.4 480.6 L758.9 480.9 L764.3 476.8 L769.8 477.9 L775.2 472.7 L780.7 473.6 L786.2 470.3 L791.6 471.8 L797.1 471.0 L802.5 468.6 L808.0 476.0 L813.5 477.0 L818.9 467.2 L824.4 479.8 L829.8 471.3 L835.3 472.6 L840.8 481.6 L846.2 469.8 L851.7 469.0 L857.1 473.1 L862.6 471.5 L868.1 470.4 L873.5 480.6 L879.0 474.9 L884.4 475.2 L889.9 470.3 L895.4 470.9 L900.8 470.6 L906.3 474.3 L911.7 469.7 L917.2 473.0 L922.7 472.9 L928.1 479.9 L933.6 482.9 L939.0 481.5 L944.5 478.1 L950.0 482.0 L954.0 476.2 L955.4 469.1 L960.9 442.0 L964.0 426.5 L966.3 423.2 L970.0 418.0 L971.8 413.1 L977.3 398.1 L982.7 383.1 L984.0 379.6 L988.2 367.3 L992.0 356.1 L993.6 351.8 L999.1 337.5 L1002.0 329.9 L1004.6 323.3 L1010.0 309.3 L1015.5 295.2 L1020.9 281.2 L1026.4 267.1 L1031.9 253.1 L1034.8 245.5 L1037.3 249.0 L1042.8 254.1 L1048.2 263.7 L1049.0 264.2 L1053.7 270.0 L1059.2 276.2 L1064.6 284.3 L1067.5 291.4 L1070.1 291.5 L1075.5 304.7 L1078.7 313.9 L1081.0 318.3 L1086.5 328.4 L1091.9 343.8 L1093.6 342.2 L1097.4 351.5 L1102.8 361.1 L1108.3 367.9 L1108.5 364.7 L1113.8 381.6 L1119.2 391.0 L1123.4 399.5 L1124.7 405.6 L1130.1 417.5 L1135.6 427.7 L1138.3 431.6 L1141.1 442.4 L1146.5 466.0 L1149.7 478.8 L1152.0 487.5 L1157.4 497.6 L1162.9 507.4 L1168.4 514.3 L1173.8 528.2 L1177.0 532.4 L1179.3 543.0 L1184.7 558.0 L1189.8 570.7 L1190.2 568.8 L1195.7 583.5 L1201.1 598.4 L1206.6 616.2 L1206.7 614.8 L1212.0 611.3 L1215.0 609.1 L1217.5 615.7 L1223.0 618.6 L1228.4 632.5 L1232.0 632.4 L1233.9 634.1 L1239.3 645.1 L1244.8 645.5 L1250.3 649.5 L1255.0 653.0 L1255.7 653.5 L1261.2 657.5 L1266.6 661.5 L1267.0 661.8 L1272.1 661.8 L1277.6 661.8 L1283.0 661.8 L1288.5 661.8 L1293.9 661.8 L1299.4 661.8 L1304.9 661.8 L1310.3 661.8 L1315.8 661.8 L1321.2 661.8 L1322.0 661.8" stroke="#d43a78" stroke-width="1.2" stroke-dasharray="2 2"/>
<path d="M465.5 661.8 L469.5 661.8 L474.9 661.8 L480.4 661.8 L485.9 661.8 L491.3 661.8 L496.8 661.8 L502.2 661.8 L507.7 661.8 L513.2 661.8 L518.6 661.8 L520.0 661.8 L524.1 655.4 L529.5 646.9 L535.0 638.8 L540.5 626.9 L545.9 617.0 L551.4 613.4 L556.8 606.6 L562.3 598.6 L567.8 583.2 L573.2 581.6 L578.7 569.6 L582.0 568.6 L584.1 562.3 L589.6 551.5 L595.1 552.4 L600.5 539.2 L606.0 535.3 L611.4 524.9 L616.9 519.9 L622.4 517.5 L627.8 504.5 L633.3 501.4 L638.7 494.6 L643.0 489.3 L644.2 489.3 L649.7 489.3 L655.1 489.5 L660.6 496.5 L666.0 496.8 L671.5 489.5 L677.0 490.1 L682.4 492.4 L687.9 494.8 L693.3 491.8 L698.8 492.2 L704.3 484.4 L709.7 497.0 L715.2 485.8 L720.6 484.4 L726.1 495.2 L731.6 483.2 L737.0 486.4 L742.5 483.6 L747.9 492.8 L753.4 491.6 L758.9 491.3 L764.3 482.2 L769.8 488.3 L775.2 491.8 L780.7 490.8 L786.2 493.1 L791.6 496.5 L797.1 495.7 L802.5 484.8 L808.0 493.0 L813.5 483.3 L818.9 493.6 L824.4 493.4 L829.8 489.7 L835.3 494.5 L840.8 491.8 L846.2 483.1 L851.7 484.2 L857.1 485.3 L862.6 488.0 L868.1 483.8 L873.5 483.4 L879.0 489.3 L884.4 486.8 L889.9 496.8 L895.4 486.6 L900.8 490.8 L906.3 486.3 L911.7 488.0 L917.2 493.4 L922.7 496.9 L928.1 483.8 L933.6 495.8 L937.0 490.2 L939.0 485.7 L944.5 473.6 L948.0 465.8 L950.0 462.0 L955.4 451.4 L960.9 440.8 L966.3 430.2 L970.7 421.8 L971.8 418.2 L977.3 400.7 L982.7 383.2 L985.6 374.0 L988.2 366.2 L993.6 349.7 L999.1 333.3 L1004.6 316.8 L1008.0 306.4 L1010.0 301.6 L1015.5 288.4 L1020.9 275.1 L1026.4 261.9 L1026.6 261.4 L1031.9 245.8 L1037.3 229.6 L1042.8 213.5 L1045.2 207.3 L1048.2 198.9 L1053.7 179.8 L1058.2 165.0 L1059.2 173.1 L1064.6 185.6 L1067.5 196.4 L1070.1 198.3 L1075.5 207.8 L1081.0 217.8 L1082.4 219.9 L1086.5 229.4 L1091.7 236.8 L1091.9 240.3 L1097.4 253.4 L1101.0 255.6 L1102.8 257.2 L1108.3 268.2 L1112.2 275.4 L1113.8 278.1 L1119.2 289.9 L1123.4 296.4 L1124.7 301.7 L1130.1 315.4 L1134.5 327.0 L1135.6 326.5 L1141.1 333.3 L1145.7 342.1 L1146.5 346.5 L1152.0 359.2 L1157.0 370.0 L1157.4 371.8 L1162.9 381.0 L1168.0 391.3 L1168.4 390.2 L1173.8 393.2 L1179.3 407.7 L1183.0 410.5 L1184.7 414.0 L1190.2 426.0 L1195.7 444.7 L1197.8 449.7 L1201.1 457.9 L1206.6 470.0 L1211.0 480.3 L1212.0 480.6 L1217.0 500.7 L1217.5 500.9 L1223.0 511.6 L1223.6 512.0 L1228.4 509.4 L1232.0 509.8 L1233.9 515.4 L1239.3 521.8 L1244.8 529.7 L1249.0 535.2 L1250.3 534.3 L1254.0 531.5 L1255.7 533.5 L1261.2 540.0 L1265.8 545.5 L1266.6 547.4 L1271.0 556.8 L1272.1 556.4 L1276.4 554.9 L1277.6 558.9 L1281.6 572.7 L1283.0 573.2 L1288.5 574.9 L1292.2 576.0 L1293.9 631.7 L1294.0 633.7 L1296.0 661.8 L1299.4 661.8 L1304.9 661.8 L1310.3 661.8 L1315.8 661.8 L1321.2 661.8 L1322.0 661.8" stroke="#d43a78" stroke-width="1.2" stroke-dasharray="2 2"/>
</g>
<line x1="465" y1="665.5" x2="1322" y2="665.5" stroke="#6b6b6b" stroke-width="2"/>
<line x1="465.5" y1="665" x2="465.5" y2="671" stroke="#6b6b6b" stroke-width="1.2"/>
<line x1="480.4" y1="665" x2="480.4" y2="671" stroke="#6b6b6b" stroke-width="1.2"/>
<text x="480.4" y="679.6" font-size="10.5" text-anchor="middle" fill="#333" font-family="Liberation Sans">08:10</text>
<line x1="535.0" y1="665" x2="535.0" y2="671" stroke="#6b6b6b" stroke-width="1.2"/>
<text x="535.0" y="679.6" font-size="10.5" text-anchor="middle" fill="#333" font-family="Liberation Sans">08:15</text>
<line x1="589.6" y1="665" x2="589.6" y2="671" stroke="#6b6b6b" stroke-width="1.2"/>
<text x="589.6" y="679.6" font-size="10.5" text-anchor="middle" fill="#333" font-family="Liberation Sans">08:20</text>
<line x1="644.3" y1="665" x2="644.3" y2="671" stroke="#6b6b6b" stroke-width="1.2"/>
<text x="644.3" y="679.6" font-size="10.5" text-anchor="middle" fill="#333" font-family="Liberation Sans">08:25</text>
<line x1="698.9" y1="665" x2="698.9" y2="671" stroke="#6b6b6b" stroke-width="1.2"/>
<text x="698.9" y="679.6" font-size="10.5" text-anchor="middle" fill="#333" font-family="Liberation Sans">08:30</text>
<line x1="753.5" y1="665" x2="753.5" y2="671" stroke="#6b6b6b" stroke-width="1.2"/>
<text x="753.5" y="679.6" font-size="10.5" text-anchor="middle" fill="#333" font-family="Liberation Sans">08:35</text>
<line x1="808.1" y1="665" x2="808.1" y2="671" stroke="#6b6b6b" stroke-width="1.2"/>
<text x="808.1" y="679.6" font-size="10.5" text-anchor="middle" fill="#333" font-family="Liberation Sans">08:40</text>
<line x1="862.7" y1="665" x2="862.7" y2="671" stroke="#6b6b6b" stroke-width="1.2"/>
<text x="862.7" y="679.6" font-size="10.5" text-anchor="middle" fill="#333" font-family="Liberation Sans">08:45</text>
<line x1="917.4" y1="665" x2="917.4" y2="671" stroke="#6b6b6b" stroke-width="1.2"/>
<text x="917.4" y="679.6" font-size="10.5" text-anchor="middle" fill="#333" font-family="Liberation Sans">08:50</text>
<line x1="972.0" y1="665" x2="972.0" y2="671" stroke="#6b6b6b" stroke-width="1.2"/>
<text x="972.0" y="679.6" font-size="10.5" text-anchor="middle" fill="#333" font-family="Liberation Sans">08:55</text>
<line x1="1026.6" y1="665" x2="1026.6" y2="671" stroke="#6b6b6b" stroke-width="1.2"/>
<text x="1026.6" y="679.6" font-size="10.5" text-anchor="middle" fill="#333" font-family="Liberation Sans">09 AM</text>
<line x1="1081.2" y1="665" x2="1081.2" y2="671" stroke="#6b6b6b" stroke-width="1.2"/>
<text x="1081.2" y="679.6" font-size="10.5" text-anchor="middle" fill="#333" font-family="Liberation Sans">09:05</text>
<line x1="1135.8" y1="665" x2="1135.8" y2="671" stroke="#6b6b6b" stroke-width="1.2"/>
<text x="1135.8" y="679.6" font-size="10.5" text-anchor="middle" fill="#333" font-family="Liberation Sans">09:10</text>
<line x1="1190.5" y1="665" x2="1190.5" y2="671" stroke="#6b6b6b" stroke-width="1.2"/>
<text x="1190.5" y="679.6" font-size="10.5" text-anchor="middle" fill="#333" font-family="Liberation Sans">09:15</text>
<line x1="1245.1" y1="665" x2="1245.1" y2="671" stroke="#6b6b6b" stroke-width="1.2"/>
<text x="1245.1" y="679.6" font-size="10.5" text-anchor="middle" fill="#333" font-family="Liberation Sans">09:20</text>
<line x1="1299.7" y1="665" x2="1299.7" y2="671" stroke="#6b6b6b" stroke-width="1.2"/>
<text x="1299.7" y="679.6" font-size="10.5" text-anchor="middle" fill="#333" font-family="Liberation Sans">09:25</text>
<line x1="1322" y1="665" x2="1322" y2="671" stroke="#6b6b6b" stroke-width="1.2"/>
<rect x="465" y="729.3" width="857" height="31.2" fill="#f0f0f0"/>
<path d="M465.5 732.1 L467.6 759.0 L469.2 732.0 L470.9 759.8 L472.1 732.6 L473.9 758.0 L476.0 732.2 L477.1 758.9 L477.9 731.5 L478.8 759.1 L480.8 732.3 L482.3 759.1 L483.5 741.0 L485.4 759.4 L486.6 731.1 L488.4 758.3 L489.8 739.8 L490.6 758.2 L492.0 736.2 L492.9 758.4 L494.1 731.7 L496.3 759.8 L497.4 731.1 L499.3 758.9 L500.7 732.5 L501.7 759.8 L503.1 731.5 L505.3 755.6 L507.3 731.8 L509.3 759.8 L511.5 731.5 L513.4 759.4 L514.3 732.2 L515.4 759.3 L516.9 736.9 L518.5 756.5 L519.5 739.5 L520.6 758.5 L522.7 732.9 L524.8 759.2 L525.7 732.9 L526.9 759.5 L528.8 731.6 L529.9 759.9 L531.0 732.7 L532.6 758.2 L533.7 731.5 L535.1 759.6 L536.5 731.3 L537.8 750.2 L539.5 732.2 L540.5 760.0 L542.6 732.9 L543.4 759.0 L545.2 733.0 L546.1 758.5 L548.2 732.4 L550.1 755.2 L551.8 740.0 L553.2 758.3 L554.8 731.8 L556.4 759.8 L558.1 740.0 L560.0 758.5 L561.6 732.7 L562.5 759.9 L564.1 731.5 L565.9 758.8 L568.0 731.0 L569.2 759.6 L570.3 738.3 L571.7 755.4 L573.4 731.9 L575.3 751.0 L576.7 731.6 L577.7 758.3 L579.7 732.9 L580.8 759.1 L582.0 731.8 L583.7 759.4 L585.7 736.6 L586.6 758.3 L587.4 732.1 L588.7 760.0 L589.7 731.0 L591.6 759.7 L592.5 731.9 L594.2 758.4 L596.3 731.4 L597.8 760.0 L599.2 731.4 L600.4 758.6 L602.0 732.5 L603.3 758.2 L604.2 738.8 L605.2 758.7 L607.3 732.1 L609.3 758.1 L610.8 731.4 L612.6 752.9 L614.4 732.8 L616.6 753.7 L618.5 732.8 L620.5 759.8 L621.9 732.5 L623.4 758.4 L624.2 731.3 L625.5 759.7 L626.5 732.4 L628.5 758.1 L630.0 733.7 L631.1 759.4 L632.9 732.0 L634.9 759.4 L636.2 740.2 L637.3 750.3 L638.9 731.4 L640.4 758.8 L641.2 737.1 L642.6 753.5 L644.1 731.1 L645.7 758.1 L647.7 731.9 L648.7 758.4 L650.8 731.6 L651.8 758.1 L652.8 731.0 L653.9 758.6 L655.2 732.2 L656.1 759.8 L657.6 731.4 L659.2 759.2 L660.5 731.3 L661.6 758.7 L663.2 737.9 L665.2 758.5 L667.1 735.5 L668.3 756.3 L670.5 734.1 L671.7 759.5 L672.6 736.4 L674.5 759.2 L676.3 731.4 L678.0 750.3 L679.0 732.5 L680.5 759.6 L681.4 731.1 L683.0 758.9 L684.0 731.4 L685.9 750.6 L686.9 732.9 L688.3 759.3 L689.8 731.9 L691.4 758.6 L693.4 731.9 L695.2 759.6 L696.3 731.0 L698.3 752.4 L700.3 731.8 L702.0 758.0 L703.9 732.8 L705.7 758.4 L707.1 740.0 L708.9 758.5 L710.2 731.1 L711.5 760.0 L712.8 732.2 L713.9 752.7 L715.2 732.1 L716.8 758.0 L718.5 732.5 L720.6 758.8 L722.5 731.8 L723.3 759.2 L724.3 732.8 L725.8 758.1 L727.4 738.1 L729.4 758.8 L731.2 732.9 L732.3 759.7 L733.8 731.1 L735.9 758.9 L737.5 731.6 L739.2 759.4 L741.0 731.0 L742.2 759.7 L744.0 732.8 L745.9 758.0 L748.0 732.8 L749.4 758.1 L750.5 732.9 L752.4 758.0 L754.3 731.2 L756.0 759.6 L756.9 731.2 L758.3 759.1 L759.4 731.8 L761.3 758.0 L763.5 731.5 L764.4 751.7 L766.1 731.5 L767.9 758.8 L769.5 731.4 L770.7 750.7 L772.7 731.1 L773.9 758.8 L774.8 731.1 L775.8 758.9 L777.4 732.0 L778.5 758.5 L780.5 731.2 L782.4 758.5 L783.5 731.5 L785.5 758.7 L787.7 732.1 L789.5 754.6 L790.8 732.8 L791.7 758.9 L793.2 731.6 L795.1 759.6 L796.8 731.6 L798.6 759.4 L799.6 732.5 L801.0 758.6 L802.6 740.5 L804.6 758.4 L805.9 731.8 L808.0 756.0 L809.3 731.7 L810.6 759.6 L812.2 732.1 L814.2 759.6 L816.1 735.3 L816.9 758.9 L818.5 738.2 L820.4 758.9 L822.3 731.2 L824.1 757.3 L825.8 732.5 L827.5 759.6 L829.4 732.5 L830.8 758.1 L832.5 732.1 L834.3 758.2 L835.7 738.3 L837.7 751.3 L839.7 738.1 L841.3 758.4 L842.6 731.3 L844.5 755.0 L845.5 731.8 L846.7 757.5 L848.0 732.3 L849.8 759.9 L851.3 732.8 L852.1 759.6 L853.2 732.4 L854.9 759.6 L856.1 732.5 L857.3 758.4 L858.8 732.8 L860.9 758.9 L863.0 731.4 L863.9 751.6 L865.2 732.0 L866.4 752.7 L867.5 731.9 L868.8 758.6 L870.5 731.3 L871.7 758.3 L873.3 733.0 L874.4 759.7 L876.3 732.6 L878.3 757.3 L879.5 731.2 L880.9 758.1 L882.6 735.4 L884.5 758.2 L885.4 734.7 L887.0 759.7 L888.9 731.6 L889.8 759.1 L891.6 732.4 L892.6 759.1 L894.7 738.2 L895.6 758.6 L896.7 731.9 L897.5 751.6 L898.6 731.6 L899.9 759.4 L901.2 732.3 L902.3 758.5 L903.6 737.5 L905.4 758.3 L906.4 731.2 L908.1 759.6 L909.5 737.7 L910.4 759.7 L911.4 731.1 L913.5 759.0 L915.2 732.6 L916.5 759.2 L917.3 732.4 L919.5 758.7 L921.1 731.7 L922.4 759.8 L923.8 732.6 L925.7 759.7 L927.6 737.4 L928.9 759.7 L930.7 737.1 L932.5 756.4 L934.6 731.4 L935.5 758.8 L937.3 732.9 L938.6 759.8 L940.8 732.8 L942.3 758.9 L943.5 740.9 L945.4 759.8 L947.4 732.8 L948.5 758.3 L949.6 731.2 L950.4 758.0 L952.5 731.6 L954.3 759.2 L955.9 733.1 L957.0 759.7 L958.3 731.3 L959.9 758.9 L961.1 731.1 L962.9 758.1 L964.5 731.8 L966.2 758.5 L968.0 733.0 L970.0 754.7 L971.4 732.8 L973.0 759.1 L975.0 731.1 L976.8 752.1 L978.5 731.6 L980.1 759.8 L981.5 731.8 L982.4 758.9 L983.5 731.8 L984.7 758.2 L986.8 732.7 L988.2 756.2 L990.1 732.8 L991.0 759.8 L992.5 733.0 L993.7 759.4 L994.6 739.5 L995.9 758.8 L996.8 732.8 L998.0 758.1 L1000.2 731.4 L1001.4 750.8 L1002.5 735.8 L1003.9 758.2 L1006.1 732.3 L1007.2 757.6 L1008.2 731.6 L1010.2 752.3 L1011.2 732.9 L1012.6 759.6 L1013.9 731.4 L1014.9 758.7 L1016.8 732.3 L1018.9 759.5 L1020.1 738.3 L1021.3 759.8 L1023.4 732.1 L1025.0 758.8 L1026.2 732.6 L1027.1 758.5 L1028.2 732.1 L1029.3 750.1 L1030.2 732.5 L1031.5 754.0 L1032.5 732.3 L1033.8 758.4 L1035.4 732.7 L1037.1 758.1 L1038.2 731.3 L1039.8 759.1 L1041.7 732.6 L1042.8 759.6 L1044.4 731.1 L1046.1 758.9 L1048.1 731.3 L1048.9 759.1 L1050.4 732.6 L1051.3 753.4 L1052.8 731.5 L1053.8 759.9 L1055.1 732.1 L1056.2 759.8 L1058.2 731.5 L1059.2 758.3 L1061.1 731.8 L1062.4 758.1 L1063.3 732.5 L1065.5 759.1 L1067.3 731.5 L1069.3 759.2 L1070.6 731.2 L1071.4 751.9 L1073.2 731.5 L1074.8 759.1 L1076.9 731.7 L1079.1 759.9 L1080.4 731.1 L1081.7 758.3 L1083.4 736.7 L1084.7 755.0 L1086.6 731.7 L1087.7 759.7 L1088.7 731.9 L1090.0 758.0 L1091.7 734.6 L1093.1 758.6 L1094.4 731.0 L1095.4 759.2 L1097.5 731.5 L1098.8 758.1 L1100.1 732.4 L1102.2 759.4 L1103.5 732.8 L1104.8 759.0 L1105.7 731.5 L1106.5 758.8 L1107.4 731.8 L1108.9 758.6 L1110.1 732.3 L1111.1 759.4 L1112.9 731.8 L1114.9 759.4 L1116.2 731.1 L1117.0 758.9 L1119.0 735.4 L1120.7 756.3 L1122.5 732.9 L1124.5 758.7 L1125.4 731.8 L1126.3 759.3 L1127.8 731.3 L1129.1 759.7 L1130.9 731.2 L1132.2 759.7 L1133.8 732.1 L1135.6 759.2 L1136.9 731.8 L1137.7 758.8 L1139.2 731.5 L1140.0 758.2 L1141.6 732.3 L1142.7 758.8 L1144.8 732.2 L1146.9 758.7 L1148.6 731.8 L1149.8 751.0 L1151.1 733.3 L1152.1 759.4 L1153.4 734.2 L1154.5 758.6 L1155.6 732.1 L1157.0 759.0 L1158.7 732.2 L1160.3 750.2 L1161.5 732.8 L1162.8 758.6 L1164.5 739.6 L1165.6 759.0 L1167.1 731.6 L1169.0 759.5 L1170.1 731.4 L1171.7 759.9 L1172.6 732.4 L1173.5 758.5 L1175.0 732.7 L1177.0 759.5 L1178.5 731.8 L1180.3 758.6 L1181.6 732.5 L1183.6 753.5 L1184.9 732.2 L1186.9 757.0 L1188.2 731.5 L1189.3 758.8 L1191.4 734.1 L1193.2 758.7 L1194.5 740.9 L1195.4 759.8 L1196.3 732.5 L1198.5 759.3 L1199.3 732.0 L1200.6 758.4 L1202.6 731.8 L1204.3 758.0 L1205.6 732.1 L1207.5 759.6 L1208.5 735.0 L1210.0 759.4 L1210.8 731.3 L1212.5 759.5 L1213.9 731.5 L1214.8 758.2 L1216.0 731.4 L1217.5 756.4 L1219.5 731.8 L1221.5 759.9 L1223.0 732.2 L1224.2 751.1 L1226.4 732.7 L1228.2 759.9 L1229.3 731.1 L1230.6 759.4 L1232.1 731.4 L1234.2 758.9 L1236.2 732.5 L1237.5 751.4 L1239.4 733.8 L1241.5 758.6 L1242.7 733.2 L1244.3 759.2 L1245.6 732.6 L1246.9 759.3 L1248.1 735.6 L1249.0 758.5 L1250.1 732.1 L1251.9 759.8 L1252.9 731.9 L1253.7 759.2 L1254.9 732.9 L1256.0 755.4 L1257.9 733.0 L1259.3 756.2 L1260.7 731.4 L1261.8 758.1 L1263.1 731.7 L1265.3 758.7 L1266.6 731.4 L1268.3 751.1 L1269.9 732.1 L1270.9 752.5 L1272.3 731.8 L1273.7 758.8 L1275.3 731.1 L1277.0 758.8 L1278.6 734.2 L1280.0 752.1 L1281.3 733.0 L1282.7 757.0 L1284.8 731.5 L1286.8 758.1 L1288.8 732.0 L1291.0 758.3 L1292.8 732.6 L1294.2 758.3 L1295.3 732.3 L1296.2 758.4 L1297.7 732.6 L1299.7 758.9 L1301.7 731.3 L1303.0 759.9 L1304.3 739.7 L1305.3 759.2 L1307.3 732.8 L1308.2 756.3 L1309.9 738.8 L1310.9 759.1 L1311.8 731.6 L1313.4 758.8 L1315.2 731.3 L1317.0 759.7 L1317.9 737.9" fill="none" stroke="#d94c86" stroke-width="0.9"/>
<line x1="977" y1="731" x2="977" y2="759" stroke="#222" stroke-width="1.4" stroke-dasharray="4 3"/>
<line x1="1018" y1="731" x2="1018" y2="759" stroke="#222" stroke-width="1.4" stroke-dasharray="4 3"/>
<line x1="1115" y1="731" x2="1115" y2="759" stroke="#222" stroke-width="1.4" stroke-dasharray="4 3"/>
<line x1="1139" y1="731" x2="1139" y2="759" stroke="#222" stroke-width="1.4" stroke-dasharray="4 3"/>
<rect x="1317" y="737" width="5" height="17.5" fill="#111"/><line x1="1320" y1="729" x2="1320" y2="762" stroke="#111" stroke-width="1"/>
<rect x="1318" y="762" width="4" height="6" fill="#bbb"/>
<line x1="465" y1="774" x2="1322" y2="774" stroke="#6b6b6b" stroke-width="2"/>
<line x1="465.5" y1="773" x2="465.5" y2="778" stroke="#6b6b6b" stroke-width="1.2"/><line x1="1321.5" y1="773" x2="1321.5" y2="778" stroke="#6b6b6b" stroke-width="1.2"/>
<line x1="494.8" y1="773" x2="494.8" y2="778" stroke="#6b6b6b" stroke-width="1.2"/>
<text x="494.8" y="788" font-size="10" letter-spacing="-0.2" text-anchor="middle" fill="#333" font-family="Liberation Sans">Sep</text>
<line x1="634.4" y1="773" x2="634.4" y2="778" stroke="#6b6b6b" stroke-width="1.2"/>
<text x="634.4" y="788" font-size="10" letter-spacing="-0.2" text-anchor="middle" fill="#333" font-family="Liberation Sans">Oct</text>
<line x1="779" y1="773" x2="779" y2="778" stroke="#6b6b6b" stroke-width="1.2"/>
<text x="779" y="788" font-size="10" letter-spacing="-0.2" text-anchor="middle" fill="#333" font-family="Liberation Sans">Nov</text>
<line x1="918.5" y1="773" x2="918.5" y2="778" stroke="#6b6b6b" stroke-width="1.2"/>
<text x="918.5" y="788" font-size="10" letter-spacing="-0.2" text-anchor="middle" fill="#333" font-family="Liberation Sans">Dec</text>
<line x1="1063" y1="773" x2="1063" y2="778" stroke="#6b6b6b" stroke-width="1.2"/>
<text x="1063" y="788" font-size="10" letter-spacing="-0.2" text-anchor="middle" fill="#333" font-family="Liberation Sans">2022</text>
<line x1="1207" y1="773" x2="1207" y2="778" stroke="#6b6b6b" stroke-width="1.2"/>
<text x="1207" y="788" font-size="10" letter-spacing="-0.2" text-anchor="middle" fill="#333" font-family="Liberation Sans">Feb</text>
</svg>
<div style="position:absolute;left:466px;top:142px;width:86px;height:24px;background:#fff;border:1px solid #e3e3e3;border-radius:3px;"></div>
<svg style="left:469px;top:148px" width="11" height="11"><circle cx="5.5" cy="5.7" r="5" fill="#c8105a"/></svg>
<div style="position:absolute;left:483px;top:145px;height:17px;line-height:17px;white-space:nowrap;font-size:11px;color:#444;">BA:T</div>
<svg style="left:538px;top:155px" width="8" height="5"><path d="M0.5 0.5 L4 4 L7.5 0.5" fill="none" stroke="#555" stroke-width="1.2"/></svg>
<div style="position:absolute;left:1290px;top:134px;width:32px;height:32px;background:#0b5cbd;border-radius:3px;"></div>
<svg style="left:0;top:0" width="1380" height="900"><polygon points="1304.55,143.97 1304.70,141.80 1307.30,141.80 1307.45,143.97 1309.24,144.71 1310.88,143.29 1312.71,145.12 1311.29,146.76 1312.03,148.55 1314.20,148.70 1314.20,151.30 1312.03,151.45 1311.29,153.24 1312.71,154.88 1310.88,156.71 1309.24,155.29 1307.45,156.03 1307.30,158.20 1304.70,158.20 1304.55,156.03 1302.76,155.29 1301.12,156.71 1299.29,154.88 1300.71,153.24 1299.97,151.45 1297.80,151.30 1297.80,148.70 1299.97,148.55 1300.71,146.76 1299.29,145.12 1301.12,143.29 1302.76,144.71" fill="#fff"/><circle cx="1306" cy="150" r="2.6" fill="#0b5cbd"/><polygon points="76.10,795.40 76.24,792.62 79.36,792.62 79.50,795.40 81.61,796.28 83.68,794.41 85.89,796.62 84.02,798.69 84.90,800.80 87.68,800.94 87.68,804.06 84.90,804.20 84.02,806.31 85.89,808.38 83.68,810.59 81.61,808.72 79.50,809.60 79.36,812.38 76.24,812.38 76.10,809.60 73.99,808.72 71.92,810.59 69.71,808.38 71.58,806.31 70.70,804.20 67.92,804.06 67.92,800.94 70.70,800.80 71.58,798.69 69.71,796.62 71.92,794.41 73.99,796.28" fill="#939393"/><circle cx="77.8" cy="802.5" r="3.4" fill="#fff"/></svg>
<div style="position:absolute;left:465px;top:690px;width:32px;height:32px;background:#fff;border:1px solid #dedede;border-radius:3px;"></div>
<svg style="left:478px;top:703px" width="5" height="7"><path d="M4 0 L0 3.5 L4 7 Z" fill="#444"/></svg>
<div style="position:absolute;left:502px;top:690px;width:32px;height:32px;background:#fff;border:1px solid #dedede;border-radius:3px;"></div>
<div style="position:absolute;left:539px;top:690px;width:32px;height:32px;background:#fff;border:1px solid #d3d6da;border-radius:3px;"></div>
<div style="position:absolute;left:803px;top:690px;width:32px;height:32px;background:#fff;border:1px solid #dedede;border-radius:3px;"></div>
<div style="position:absolute;left:839px;top:690px;width:109px;height:32px;background:#fff;border:1px solid #dedede;border-radius:3px;"></div>
<div style="position:absolute;left:916px;top:690px;width:1px;height:32px;background:#dedede;"></div>
<div style="position:absolute;left:839px;top:696px;width:77px;height:20px;line-height:20px;white-space:nowrap;font-size:14px;color:#333;text-align:center;">&plusmn; 1 hour</div>
<div style="position:absolute;left:952px;top:690px;width:32px;height:32px;background:#fff;border:1px solid #dedede;border-radius:3px;"></div>
<div style="position:absolute;left:1221px;top:690px;width:33px;height:32px;background:#fff;border:1px solid #dedede;border-radius:3px;"></div>
<div style="position:absolute;left:1258px;top:690px;width:33px;height:32px;background:#fff;border:1px solid #d3d6da;border-radius:3px;"></div>
<div style="position:absolute;left:1290px;top:690px;width:32px;height:32px;background:#fff;border:1px solid #dedede;border-radius:3px;"></div>
<svg style="left:1303px;top:703px" width="5" height="7"><path d="M0 0 L4 3.5 L0 7 Z" fill="#444"/></svg>
<svg style="left:511px;top:698px" width="15" height="16"><rect x="0.7" y="2.2" width="13.6" height="12.8" rx="1" fill="none" stroke="#8a8a8a" stroke-width="1.3"/><line x1="0.7" y1="5.5" x2="14.3" y2="5.5" stroke="#8a8a8a" stroke-width="1.2"/><line x1="4" y1="0.5" x2="4" y2="3.5" stroke="#8a8a8a" stroke-width="1.3"/><line x1="11" y1="0.5" x2="11" y2="3.5" stroke="#8a8a8a" stroke-width="1.3"/><rect x="8.5" y="9.5" width="3.5" height="3" fill="#8a8a8a"/></svg>
<svg style="left:547px;top:698px" width="16" height="16"><circle cx="8" cy="8" r="7" fill="none" stroke="#8a8a8a" stroke-width="1.3"/><path d="M8 3.8 V8.3 H11.5" fill="none" stroke="#8a8a8a" stroke-width="1.3"/></svg>
<svg style="left:1230px;top:698px" width="15" height="16"><rect x="0.7" y="2.2" width="13.6" height="12.8" rx="1" fill="none" stroke="#8a8a8a" stroke-width="1.3"/><line x1="0.7" y1="5.5" x2="14.3" y2="5.5" stroke="#8a8a8a" stroke-width="1.2"/><line x1="4" y1="0.5" x2="4" y2="3.5" stroke="#8a8a8a" stroke-width="1.3"/><line x1="11" y1="0.5" x2="11" y2="3.5" stroke="#8a8a8a" stroke-width="1.3"/><rect x="8.5" y="9.5" width="3.5" height="3" fill="#8a8a8a"/></svg>
<svg style="left:1266px;top:698px" width="16" height="16"><circle cx="8" cy="8" r="7" fill="none" stroke="#8a8a8a" stroke-width="1.3"/><path d="M8 3.8 V8.3 H11.5" fill="none" stroke="#8a8a8a" stroke-width="1.3"/></svg>
<svg style="left:811px;top:698px" width="16" height="16"><path d="M1 0 V15.3 H15.5" fill="none" stroke="#777" stroke-width="1.2"/><path d="M2 8 Q5 4 9 4 Q12 3.5 13 1.5 M2 10.5 Q5 6.5 9 6.5 H13.5" fill="none" stroke="#777" stroke-width="1.1"/><path d="M3 14 L13 9" fill="none" stroke="#777" stroke-width="1" stroke-dasharray="1.5 1"/></svg>
<svg style="left:926px;top:697px" width="12" height="17"><path d="M2.5 7 V4.5 Q2.5 1 6 1 Q9.5 1 9.5 4" fill="none" stroke="#555" stroke-width="1.4"/><rect x="1" y="7" width="10" height="9" rx="1.5" fill="none" stroke="#555" stroke-width="1.4"/><circle cx="6" cy="11.5" r="1.2" fill="#555"/></svg>
<svg style="left:960px;top:698px" width="17" height="16"><path d="M3.2 8 A6 6 0 1 0 5 3.5" fill="none" stroke="#555" stroke-width="1.5"/><path d="M0.8 7 L3.2 9.8 L5.8 7" fill="none" stroke="#555" stroke-width="1.4"/><path d="M9 4.5 V8.3 L11.5 10" fill="none" stroke="#555" stroke-width="1.4"/></svg>
<div style="position:absolute;left:465px;top:798px;width:245px;height:24px;background:#fff;border:1px solid #dedede;border-radius:3px;"></div>
<div style="position:absolute;left:465px;top:800px;width:34px;height:20px;line-height:20px;white-space:nowrap;font-size:12px;color:#333;text-align:center;">1D</div>
<div style="position:absolute;left:499px;top:798px;width:1px;height:24px;background:#dedede;"></div>
<div style="position:absolute;left:499px;top:800px;width:36.60000000000002px;height:20px;line-height:20px;white-space:nowrap;font-size:12px;color:#333;text-align:center;">1W</div>
<div style="position:absolute;left:535.6px;top:798px;width:1px;height:24px;background:#dedede;"></div>
<div style="position:absolute;left:535.6px;top:800px;width:34.69999999999993px;height:20px;line-height:20px;white-space:nowrap;font-size:12px;color:#333;text-align:center;">1M</div>
<div style="position:absolute;left:570.3px;top:798px;width:1px;height:24px;background:#dedede;"></div>
<div style="position:absolute;left:570.3px;top:800px;width:35.10000000000002px;height:20px;line-height:20px;white-space:nowrap;font-size:12px;color:#333;text-align:center;">3M</div>
<div style="position:absolute;left:605.4px;top:799px;width:35.10000000000002px;height:22px;background:#eef3f9;"></div>
<div style="position:absolute;left:605.4px;top:798px;width:1px;height:24px;background:#dedede;"></div>
<div style="position:absolute;left:605.4px;top:800px;width:35.10000000000002px;height:20px;line-height:20px;white-space:nowrap;font-size:12px;color:#1a62b8;text-align:center;">6M</div>
<div style="position:absolute;left:640.5px;top:798px;width:1px;height:24px;background:#dedede;"></div>
<div style="position:absolute;left:640.5px;top:800px;width:31.5px;height:20px;line-height:20px;white-space:nowrap;font-size:12px;color:#333;text-align:center;">1Y</div>
<div style="position:absolute;left:672px;top:798px;width:1px;height:24px;background:#dedede;"></div>
<div style="position:absolute;left:672px;top:800px;width:38px;height:20px;line-height:20px;white-space:nowrap;font-size:12px;color:#333;text-align:center;">ALL</div>
<div style="position:absolute;left:726px;top:798px;width:104px;height:24px;background:#fff;border:1px solid #dedede;border-radius:3px;"></div>
<div style="position:absolute;left:806px;top:798px;width:1px;height:24px;background:#dedede;"></div>
<div style="position:absolute;left:735px;top:800px;height:20px;line-height:20px;white-space:nowrap;font-size:12px;color:#333;letter-spacing:-0.3px;">CUSTOM</div>
<svg style="left:791px;top:807px" width="9" height="5"><path d="M0 5 L8 5 L4 0 Z" fill="#999"/></svg>
<svg style="left:812px;top:804px" width="12" height="12"><rect x="0.6" y="0.6" width="10.8" height="10.8" rx="1.5" fill="none" stroke="#8a8a8a" stroke-width="1.2"/><path d="M3 4 L5 6 L3 8 M9 4 L7 6 L9 8" fill="none" stroke="#8a8a8a" stroke-width="1"/></svg>
<div style="position:absolute;left:424px;top:437px;width:16px;height:52px;background:#fff;border:1px solid #dcdcdc;border-radius:3px;"></div>
<div style="position:absolute;left:425px;top:473px;width:14px;height:1px;background:#dcdcdc;"></div>
<svg style="left:429px;top:444px" width="6" height="23"><line x1="1.3" y1="0" x2="1.3" y2="22" stroke="#8a8a8a" stroke-width="1"/><line x1="4.7" y1="0" x2="4.7" y2="22" stroke="#8a8a8a" stroke-width="1"/></svg>
<svg style="left:428px;top:478px" width="8" height="7"><path d="M1 0.8 L6.5 6 M6.5 0.8 L1 6" stroke="#aaa" stroke-width="0.9"/></svg>
<svg style="left:0;top:0" width="1380" height="900">
<line x1="431" y1="102.8" x2="503" y2="102.8" stroke="#7a10f0" stroke-width="2.2"/>
<polyline points="437.3,95.7 429.8,102.8 437.3,110" fill="none" stroke="#7a10f0" stroke-width="2.2"/>
<line x1="424.5" y1="167.5" x2="503" y2="141.5" stroke="#7a10f0" stroke-width="2"/>
<polyline points="429,159.5 423.5,167.8 432.7,171.8" fill="none" stroke="#7a10f0" stroke-width="2"/>
</svg>
<div style="position:absolute;left:502px;top:87px;width:225px;height:31px;background:#fff;border:2px solid #7a10f0;border-radius:5px;"></div>
<div style="position:absolute;left:502px;top:92px;width:225px;height:21px;line-height:21px;white-space:nowrap;font-size:15px;font-weight:bold;color:#7a10f0;text-align:center;">Create new fingerprint</div>
<div style="position:absolute;left:502px;top:126px;width:225px;height:31px;background:#fff;border:2px solid #7a10f0;border-radius:5px;"></div>
<div style="position:absolute;left:502px;top:131px;width:225px;height:21px;line-height:21px;white-space:nowrap;font-size:15px;font-weight:bold;color:#7a10f0;text-align:center;">Open saved fingerprint</div>
</body></html>
